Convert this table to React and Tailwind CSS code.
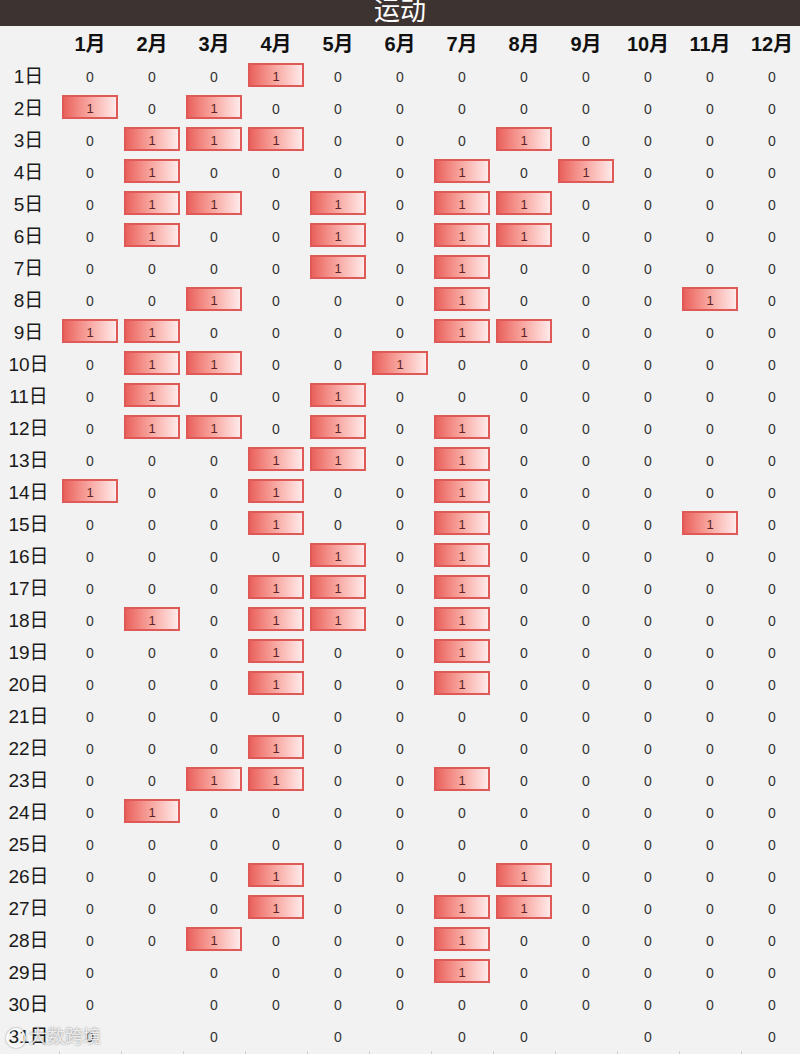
const MONTHS = ['1月', '2月', '3月', '4月', '5月', '6月', '7月', '8月', '9月', '10月', '11月', '12月']
const DAYS_IN_MONTH = [31, 28, 31, 30, 31, 30, 31, 31, 30, 31, 30, 31]

// day -> months (1-based) with a workout
const HITS = {
  1: [4],
  2: [1, 3],
  3: [2, 3, 4, 8],
  4: [2, 7, 9],
  5: [2, 3, 5, 7, 8],
  6: [2, 5, 7, 8],
  7: [5, 7],
  8: [3, 7, 11],
  9: [1, 2, 7, 8],
  10: [2, 3, 6],
  11: [2, 5],
  12: [2, 3, 5, 7],
  13: [4, 5, 7],
  14: [1, 4, 7],
  15: [4, 7, 11],
  16: [5, 7],
  17: [4, 5, 7],
  18: [2, 4, 5, 7],
  19: [4, 7],
  20: [4, 7],
  22: [4],
  23: [3, 4, 7],
  24: [2],
  26: [4, 8],
  27: [4, 7, 8],
  28: [3, 7],
  29: [7],
}

const FONT = '[font-family:"Liberation_Sans","Noto_Sans_CJK_SC",sans-serif]'

function Cell({ day, month }) {
  if (day > DAYS_IN_MONTH[month - 1]) return <div className="w-[62px] shrink-0" />
  const hit = (HITS[day] || []).includes(month)

  if (hit) {
    return (
      <div className="w-[62px] shrink-0 flex items-center justify-center">
        <div className="w-[56px] h-[24px] pt-[3px] border-2 border-[#df5a56] bg-linear-to-r from-[#e9615d] to-[#fdeaea] flex items-center justify-center text-[13px] text-[#5b2424]">
          1
        </div>
      </div>
    )
  }

  return (
    <div className="w-[62px] shrink-0 pt-[4px] flex items-center justify-center text-[14px] text-[#333]">
      0
    </div>
  )
}

export default function App() {
  const days = Array.from({ length: 31 }, (_, i) => i + 1)

  return (
    <div className={`relative w-[800px] h-[1054px] overflow-hidden bg-[#f2f2f2] ${FONT}`}>

      {/* title bar, text clipped at the top */}
      <div className="h-[26px] bg-[#3d3431] flex justify-center overflow-hidden">
        <span className="text-white text-[26px] leading-none -mt-[2px]">运动</span>
      </div>

      {/* month header */}
      <div className="flex h-[33px] pt-[2px] items-center">
        <div className="w-[59px] shrink-0" />
        {MONTHS.map((m) => (
          <div key={m} className="w-[62px] shrink-0 text-center text-[20px] font-bold text-[#111]">
            {m}
          </div>
        ))}
      </div>

      {/* day rows */}
      {days.map((d) => (
        <div key={d} className="flex h-[32px] items-center">
          <div className="w-[57px] shrink-0 mr-[2px] pt-[4px] text-center text-[19px] text-[#1a1a1a]">{d}日</div>
          {MONTHS.map((m, i) => (
            <Cell key={m} day={d} month={i + 1} />
          ))}
        </div>
      ))}

      {/* grid ticks peeking at the bottom */}
      <div className="flex h-[4px]">
        <div className="w-[59px] shrink-0" />
        {MONTHS.map((m) => (
          <div key={m} className="w-[62px] shrink-0 border-l border-[#cfcfcf]" />
        ))}
      </div>

      {/* watermark */}
      <div className="absolute left-[6px] top-[1024px] flex items-center gap-[3px] text-white/80 text-[18px] [text-shadow:0_0_2px_rgba(90,90,90,0.8)]">
        <span className="w-[20px] h-[20px] rounded-full border-2 border-white/80 [box-shadow:0_0_2px_rgba(90,90,90,0.8)]" />
        <span>大数跨境</span>
      </div>
    </div>
  )
}
